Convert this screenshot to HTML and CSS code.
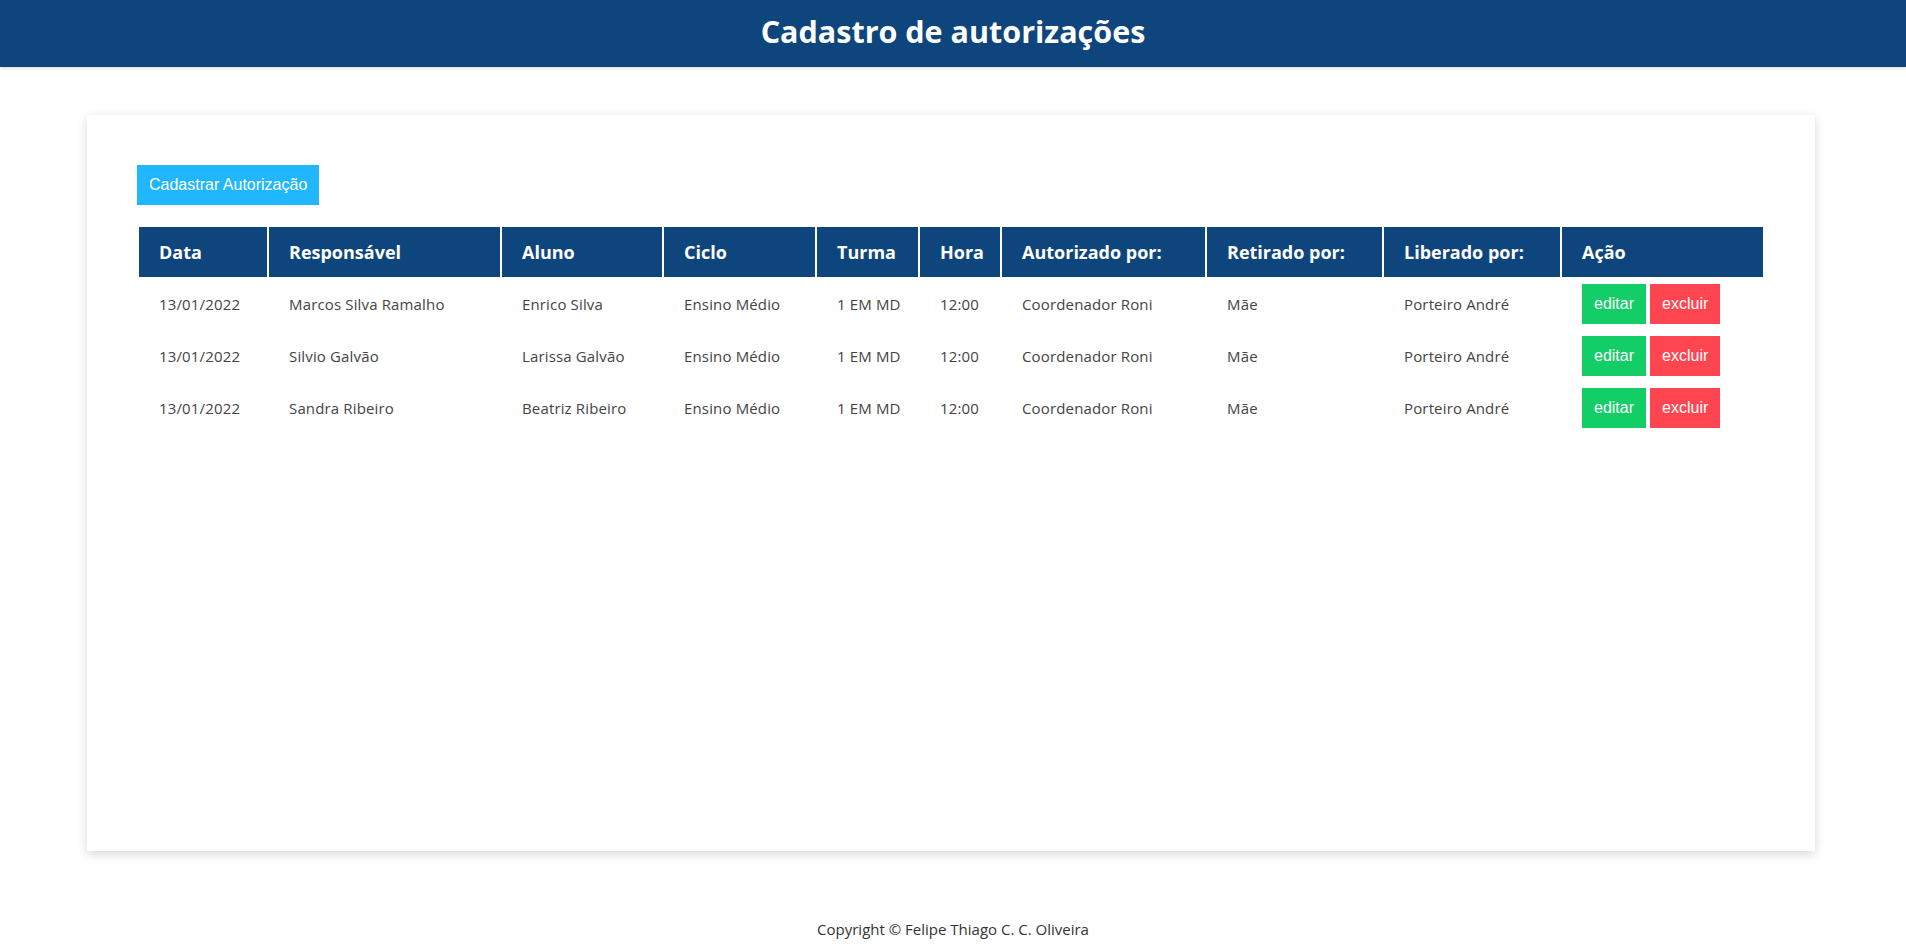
FILE: index.html
```html
<!DOCTYPE html>
<html lang="pt-BR">
<head>
<meta charset="utf-8">
<title>Cadastro de autorizações</title>
<link rel="stylesheet" href="styles.css">
</head>
<body>
<header class="topbar">
  <h1 class="topbar-title">Cadastro de autorizações</h1>
</header>
<main class="card">
  <button class="btn btn-primary" type="button">Cadastrar Autorização</button>
  <table class="grid">
    <colgroup>
      <col class="c-data"><col class="c-resp"><col class="c-aluno"><col class="c-ciclo"><col class="c-turma"><col class="c-hora"><col class="c-aut"><col class="c-ret"><col class="c-lib"><col class="c-acao">
    </colgroup>
    <thead>
      <tr>
        <th>Data</th><th>Responsável</th><th>Aluno</th><th>Ciclo</th><th>Turma</th><th>Hora</th><th>Autorizado por:</th><th>Retirado por:</th><th>Liberado por:</th><th>Ação</th>
      </tr>
    </thead>
    <tbody>
      <tr>
        <td>13/01/2022</td><td>Marcos Silva Ramalho</td><td>Enrico Silva</td><td>Ensino Médio</td><td>1 EM MD</td><td>12:00</td><td>Coordenador Roni</td><td>Mãe</td><td>Porteiro André</td>
        <td class="actions"><button class="btn btn-edit" type="button">editar</button> <button class="btn btn-del" type="button">excluir</button></td>
      </tr>
      <tr>
        <td>13/01/2022</td><td>Silvio Galvão</td><td>Larissa Galvão</td><td>Ensino Médio</td><td>1 EM MD</td><td>12:00</td><td>Coordenador Roni</td><td>Mãe</td><td>Porteiro André</td>
        <td class="actions"><button class="btn btn-edit" type="button">editar</button> <button class="btn btn-del" type="button">excluir</button></td>
      </tr>
      <tr>
        <td>13/01/2022</td><td>Sandra Ribeiro</td><td>Beatriz Ribeiro</td><td>Ensino Médio</td><td>1 EM MD</td><td>12:00</td><td>Coordenador Roni</td><td>Mãe</td><td>Porteiro André</td>
        <td class="actions"><button class="btn btn-edit" type="button">editar</button> <button class="btn btn-del" type="button">excluir</button></td>
      </tr>
    </tbody>
  </table>
</main>
<footer class="footer">Copyright © Felipe Thiago C. C. Oliveira</footer>
</body>
</html>
```
FILE: styles.css
```css
* { box-sizing: border-box; }
html, body { margin: 0; padding: 0; background: #ffffff; }
body { font-family: "Open Sans", "Liberation Sans", sans-serif; color: #444; }

.topbar {
  height: 67px;
  padding-bottom: 4px;
  background: #0e457c;
  box-shadow: 0 1px 3px rgba(0,0,0,0.18);
  display: flex;
  align-items: center;
  justify-content: center;
}
.topbar-title {
  margin: 0;
  color: #fff;
  font-size: 30.5px;
  font-weight: 700;
  line-height: 1;
}

.card {
  display: block;
  width: 1728px;
  min-height: 736px;
  margin: 48px 0 0 87px;
  padding: 50px;
  background: #fff;
  box-shadow: 0 3px 10px rgba(0,0,0,0.16);
}

.btn {
  border: 0;
  border-radius: 0;
  color: #fff;
  font-family: "Liberation Sans", Arial, sans-serif;
  font-size: 16px;
  line-height: 18px;
  height: 40px;
  padding: 0 12px;
  cursor: pointer;
  vertical-align: middle;
}
.btn-primary { background: #20b7ff; }
.btn-edit { background: #13ce66; }
.btn-del { background: #ff4550; }

.grid {
  width: 100%;
  table-layout: fixed;
  border-collapse: separate;
  border-spacing: 2px;
  margin-top: 20px;
}
.c-data { width: 128px; }
.c-resp { width: 231px; }
.c-aluno { width: 160px; }
.c-ciclo { width: 151px; }
.c-turma { width: 101px; }
.c-hora { width: 80px; }
.c-aut { width: 203px; }
.c-ret { width: 175px; }
.c-lib { width: 176px; }
.c-acao { width: 201px; }

.grid th {
  height: 50px;
  padding: 0 20px;
  background: #0e457c;
  color: #fff;
  font-size: 18px;
  font-weight: 700;
  text-align: left;
  white-space: nowrap;
}
.grid td {
  height: 50px;
  padding: 0 20px;
  font-size: 15px;
  letter-spacing: 0.15px;
  color: #444;
  white-space: nowrap;
  vertical-align: middle;
}
.grid td.actions { font-size: 0; letter-spacing: 0; }
.grid td.actions .btn + .btn { margin-left: 4px; }

.footer {
  margin-top: 68px;
  text-align: center;
  font-size: 15px;
  line-height: 20px;
  color: #333;
}
```
